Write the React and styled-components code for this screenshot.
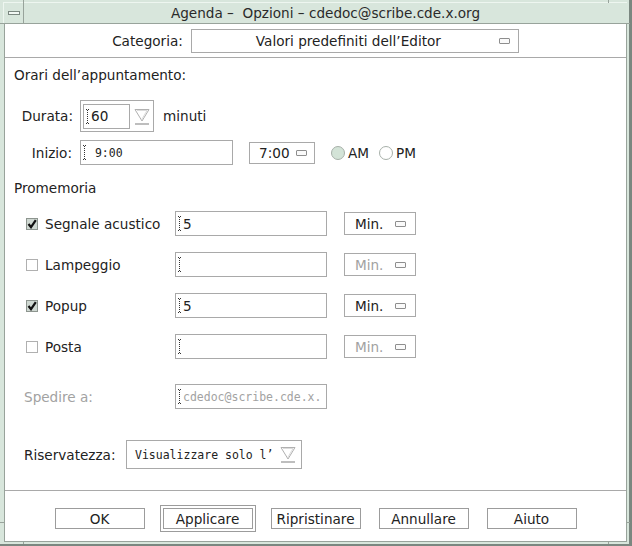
import React from 'react';
import styled, { createGlobalStyle } from 'styled-components';

const GlobalStyle = createGlobalStyle`
  html, body {
    margin: 0;
    padding: 0;
    background: #ffffff;
  }
  body {
    font-family: "DejaVu Sans", "Noto Sans", sans-serif;
    font-size: 13.6px;
    color: #222;
  }
`;

const MINT = '#d8e6dc';
const FRAME_DARK = '#7b8780';
const LINE = '#98a39b';
const BORDER = '#a9a9a9';
const DISABLED = '#a2a2a2';

const Window = styled.div`
  position: relative;
  width: 632px;
  height: 546px;
  box-sizing: border-box;
  background: ${MINT};
  border-right: 3px solid ${FRAME_DARK};
  border-bottom: 2px solid ${FRAME_DARK};
  padding: 3px 2px 2px 4px;
  display: flex;
  flex-direction: column;
`;

const Tick = styled.span`
  position: absolute;
  background: ${LINE};
  width: ${p => (p.$horizontal ? '4px' : '1px')};
  height: ${p => (p.$horizontal ? '1px' : '3px')};
`;

const TitleBar = styled.div`
  height: 20px;
  margin-left: -1px;
  display: flex;
  border-top: 1px solid #eef6f0;
  border-left: 1px solid #eef6f0;
  border-bottom: 1px solid ${LINE};
  box-sizing: content-box;
  margin-top: -1px;
`;

const MenuButton = styled.div`
  width: 19px;
  border-right: 1px solid ${LINE};
  display: flex;
  align-items: center;
  justify-content: center;
`;

const MenuBar = styled.span`
  width: 10px;
  height: 2px;
  border: 1px solid ${FRAME_DARK};
  background: #f2f8f4;
`;

const Title = styled.div`
  flex: 1;
  text-align: center;
  line-height: 20px;
  color: #2a2a2a;
  white-space: pre;
`;

const Content = styled.div`
  flex: 1;
  background: #fff;
  border: 1px solid ${LINE};
  border-top: none;
  display: flex;
  flex-direction: column;
`;

const CategoryRow = styled.div`
  height: 33px;
  display: flex;
  align-items: center;
  justify-content: center;
  gap: 8px;
  border-bottom: 1px solid ${BORDER};
`;

const Body = styled.div`
  flex: 1;
  padding-left: 9px;
  display: flex;
  flex-direction: column;
`;

const Heading = styled.div`
  line-height: 17px;
  margin-top: ${p => p.$top}px;
`;

const Row = styled.div`
  display: flex;
  align-items: center;
  margin-top: ${p => p.$top}px;
  padding-left: ${p => p.$indent || 0}px;
`;

const Label = styled.span`
  width: ${p => p.$width}px;
  text-align: ${p => (p.$right ? 'right' : 'left')};
  margin-right: ${p => p.$gap || 0}px;
  color: ${p => (p.$disabled ? DISABLED : '#222')};
  flex-shrink: 0;
  white-space: nowrap;
`;

const Field = styled.div`
  width: ${p => p.$width}px;
  height: 25px;
  box-sizing: border-box;
  border: 1px solid ${BORDER};
  background: #fff;
  display: flex;
  align-items: center;
  padding-left: 1px;
  flex-shrink: 0;
  font-family: ${p => (p.$mono ? '"DejaVu Sans Mono", monospace' : 'inherit')};
  font-size: ${p => (p.$mono ? '11.5px' : '13.6px')};
  color: ${p => (p.$disabled ? DISABLED : '#222')};
  overflow: hidden;
  white-space: nowrap;
`;

const SpinBox = styled.div`
  display: flex;
  align-items: center;
  border: 1px solid ${BORDER};
  padding: 2px 3px 2px 2px;
  height: 32px;
  box-sizing: border-box;
  gap: 4px;
`;

const MenuSelect = styled.div`
  width: ${p => p.$width}px;
  height: ${p => p.$height || 23}px;
  box-sizing: border-box;
  border: 1px solid ${BORDER};
  background: #fff;
  display: flex;
  align-items: center;
  gap: 4px;
  padding: 0 ${p => p.$padRight || 9}px 0 ${p => p.$padLeft || 10}px;
  margin-left: ${p => p.$left || 0}px;
  flex-shrink: 0;
  color: ${p => (p.$disabled ? DISABLED : '#222')};
  font-family: ${p => (p.$mono ? '"DejaVu Sans Mono", monospace' : 'inherit')};
  font-size: ${p => (p.$mono ? '11.5px' : '13.6px')};
  white-space: nowrap;
`;

const MenuText = styled.span`
  flex: 1;
  text-align: ${p => (p.$center ? 'center' : 'left')};
`;

const Indicator = styled.span`
  width: 9px;
  height: 4px;
  border: 1px solid #8e8e8e;
  border-radius: 1px;
  background: #fafafa;
  flex-shrink: 0;
`;

const Radio = styled.span`
  width: 12px;
  height: 12px;
  border-radius: 50%;
  border: 1px solid #a7b0a9;
  background: ${p => (p.$on ? '#d3e3d7' : '#fff')};
  margin: 0 3px 0 ${p => p.$left}px;
  flex-shrink: 0;
`;

const CheckBox = styled.span`
  width: 10px;
  height: 10px;
  border: 1px solid ${p => (p.$on ? '#8d958f' : '#b0b0b0')};
  background: ${p => (p.$on ? '#cfd8d2' : '#fff')};
  margin-right: 7px;
  display: flex;
  align-items: center;
  justify-content: center;
  flex-shrink: 0;
`;

const CheckLabel = styled.div`
  width: 149px;
  display: flex;
  align-items: center;
  flex-shrink: 0;
`;

const Footer = styled.div`
  height: 51px;
  border-top: 1px solid ${BORDER};
  display: flex;
  justify-content: center;
  align-items: flex-start;
  padding-top: 17px;
  box-sizing: border-box;
  gap: 18px;
`;

const Button = styled.div`
  width: 90px;
  height: 21px;
  box-sizing: border-box;
  border: 1px solid #9c9c9c;
  display: flex;
  align-items: center;
  justify-content: center;
  outline: ${p => (p.$default ? '1px solid #9c9c9c' : 'none')};
  outline-offset: 2px;
`;

const Cursor = () => (
  <svg width="5" height="15" viewBox="0 0 5 15" style={{ flexShrink: 0, marginRight: 1 }}>
    <path d="M2.5 1v13" stroke="#333" strokeWidth="1" strokeDasharray="1 1" />
    <path d="M1 0.5h1M3 0.5h1M1 14.5h1M3 14.5h1" stroke="#333" strokeWidth="1" />
  </svg>
);

const DropArrow = () => (
  <svg width="16" height="17" viewBox="0 0 16 17" style={{ flexShrink: 0 }}>
    <path d="M1 1.5h14L8 13z" fill="none" stroke="#b0b0b0" strokeWidth="1" />
    <path d="M3 2.5h10L8 11" fill="none" stroke="#dcdcdc" strokeWidth="1" />
    <path d="M1 16h14" stroke="#a8a8a8" strokeWidth="1.5" />
  </svg>
);

const Check = () => (
  <svg width="10" height="10" viewBox="0 0 10 10">
    <path d="M1.5 5l2.5 3.2L8.8 1.2" fill="none" stroke="#111" strokeWidth="2.2" />
  </svg>
);

const reminders = [
  { name: 'Segnale acustico', on: true, value: '5' },
  { name: 'Lampeggio', on: false, value: '' },
  { name: 'Popup', on: true, value: '5' },
  { name: 'Posta', on: false, value: '' },
];

const ticks = [
  { left: 23, top: 0 },
  { left: 608, top: 0 },
  { left: 23, top: 541 },
  { left: 608, top: 541 },
  { left: 0, top: 23, h: true },
  { left: 0, top: 522, h: true },
  { left: 626, top: 23, h: true },
  { left: 626, top: 522, h: true },
];

export default function App() {
  return (
    <>
      <GlobalStyle />
      <Window>
        {ticks.map((t, i) => (
          <Tick key={i} $horizontal={t.h} style={{ left: t.left, top: t.top }} />
        ))}
        <TitleBar>
          <MenuButton>
            <MenuBar />
          </MenuButton>
          <Title>Agenda –  Opzioni – cdedoc@scribe.cde.x.org</Title>
        </TitleBar>
        <Content>
          <CategoryRow>
            <span>Categoria:</span>
            <MenuSelect $width={328} $height={24} $padRight={8}>
              <MenuText $center>Valori predefiniti dell’Editor</MenuText>
              <Indicator />
            </MenuSelect>
          </CategoryRow>
          <Body>
            <Heading $top={9}>Orari dell’appuntamento:</Heading>
            <Row $top={16}>
              <Label $width={59} $right $gap={7}>Durata:</Label>
              <SpinBox>
                <Field $width={47}>
                  <Cursor />
                  60
                </Field>
                <DropArrow />
              </SpinBox>
              <Label $width={60} style={{ marginLeft: 9 }}>minuti</Label>
            </Row>
            <Row $top={8}>
              <Label $width={58} $right $gap={8}>Inizio:</Label>
              <Field $width={153} $mono>
                <Cursor />
                &nbsp;9:00
              </Field>
              <MenuSelect $width={66} $height={22} $left={16} $padLeft={9} $padRight={7}>
                <MenuText>7:00</MenuText>
                <Indicator />
              </MenuSelect>
              <Radio $on $left={16} />
              <span>AM</span>
              <Radio $left={10} />
              <span>PM</span>
            </Row>
            <Heading $top={15}>Promemoria</Heading>
            {reminders.map((r, i) => (
              <Row key={r.name} $top={i === 0 ? 14 : 16} $indent={12}>
                <CheckLabel>
                  <CheckBox $on={r.on}>{r.on && <Check />}</CheckBox>
                  {r.name}
                </CheckLabel>
                <Field $width={152}>
                  <Cursor />
                  {r.value}
                </Field>
                <MenuSelect $width={72} $left={17} $disabled={!r.on}>
                  <MenuText>Min.</MenuText>
                  <Indicator />
                </MenuSelect>
              </Row>
            ))}
            <Row $top={25} $indent={10}>
              <Label $width={151} $disabled>Spedire a:</Label>
              <Field $width={152} $mono $disabled>
                <Cursor />
                cdedoc@scribe.cde.x.
              </Field>
            </Row>
            <Row $top={31} $indent={10}>
              <Label $width={95} $gap={7}>Riservatezza:</Label>
              <MenuSelect $width={176} $height={29} $padLeft={8} $padRight={5} $mono>
                <MenuText>Visualizzare solo l’</MenuText>
                <DropArrow />
              </MenuSelect>
            </Row>
          </Body>
          <Footer>
            <Button>OK</Button>
            <Button $default>Applicare</Button>
            <Button>Ripristinare</Button>
            <Button>Annullare</Button>
            <Button>Aiuto</Button>
          </Footer>
        </Content>
      </Window>
    </>
  );
}
